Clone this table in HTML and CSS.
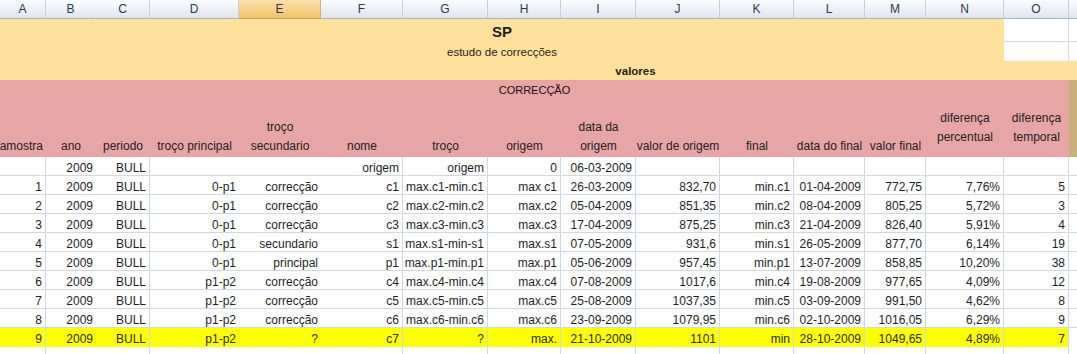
FILE: index.html
```html
<!DOCTYPE html>
<html lang="pt">
<head>
<meta charset="utf-8">
<title>SP - estudo de correcções</title>
<link rel="stylesheet" href="styles.css">
</head>
<body>
<div class="sheet">
  <div class="r heads">
    <div class="ch">A</div><div class="ch nob">B</div><div class="ch">C</div><div class="ch">D</div>
    <div class="ch sel">E</div><div class="ch">F</div><div class="ch">G</div><div class="ch">H</div>
    <div class="ch">I</div><div class="ch">J</div><div class="ch">K</div><div class="ch">L</div>
    <div class="ch">M</div><div class="ch">N</div><div class="ch">O</div><div class="ch last"></div>
  </div>

  <div class="title sp">SP</div>
  <div class="blank bb br"></div>
  <div class="blank bb"></div>

  <div class="title sub">estudo de correcções</div>
  <div class="blank br"></div>
  <div class="blank"></div>

  <div class="band lead"></div>
  <div class="band val">valores</div>
  <div class="band tail"></div>

  <div class="corr">CORRECÇÃO</div>
  <div class="tan"></div>

  <div class="lbl lbl-a"><span>amostra</span></div>
  <div class="lbl"><span>ano</span></div>
  <div class="lbl"><span>periodo</span></div>
  <div class="lbl"><span>troço principal</span></div>
  <div class="lbl"><span>troço</span><span>secundario</span></div>
  <div class="lbl"><span>nome</span></div>
  <div class="lbl"><span>troço</span></div>
  <div class="lbl"><span>origem</span></div>
  <div class="lbl"><span>data da</span><span>origem</span></div>
  <div class="lbl"><span>valor de origem</span></div>
  <div class="lbl"><span>final</span></div>
  <div class="lbl"><span>data do final</span></div>
  <div class="lbl"><span>valor final</span></div>
  <div class="lbl mid"><span>diferença</span><span>percentual</span></div>
  <div class="lbl mid"><span>diferença</span><span>temporal</span></div>

  <div class="r"><div></div><div>2009</div><div>BULL</div><div></div><div></div><div>origem</div><div>origem</div><div>0</div><div>06-03-2009</div><div></div><div></div><div></div><div></div><div></div><div></div><div></div></div>
  <div class="r"><div>1</div><div>2009</div><div>BULL</div><div>0-p1</div><div>correcção</div><div>c1</div><div>max.c1-min.c1</div><div>max c1</div><div>26-03-2009</div><div>832,70</div><div>min.c1</div><div>01-04-2009</div><div>772,75</div><div>7,76%</div><div>5</div><div></div></div>
  <div class="r"><div>2</div><div>2009</div><div>BULL</div><div>0-p1</div><div>correcção</div><div>c2</div><div>max.c2-min.c2</div><div>max.c2</div><div>05-04-2009</div><div>851,35</div><div>min.c2</div><div>08-04-2009</div><div>805,25</div><div>5,72%</div><div>3</div><div></div></div>
  <div class="r"><div>3</div><div>2009</div><div>BULL</div><div>0-p1</div><div>correcção</div><div>c3</div><div>max.c3-min.c3</div><div>max.c3</div><div>17-04-2009</div><div>875,25</div><div>min.c3</div><div>21-04-2009</div><div>826,40</div><div>5,91%</div><div>4</div><div></div></div>
  <div class="r"><div>4</div><div>2009</div><div>BULL</div><div>0-p1</div><div>secundario</div><div>s1</div><div>max.s1-min-s1</div><div>max.s1</div><div>07-05-2009</div><div>931,6</div><div>min.s1</div><div>26-05-2009</div><div>877,70</div><div>6,14%</div><div>19</div><div></div></div>
  <div class="r"><div>5</div><div>2009</div><div>BULL</div><div>0-p1</div><div>principal</div><div>p1</div><div>max.p1-min.p1</div><div>max.p1</div><div>05-06-2009</div><div>957,45</div><div>min.p1</div><div>13-07-2009</div><div>858,85</div><div>10,20%</div><div>38</div><div></div></div>
  <div class="r"><div>6</div><div>2009</div><div>BULL</div><div>p1-p2</div><div>correcção</div><div>c4</div><div>max.c4-min.c4</div><div>max.c4</div><div>07-08-2009</div><div>1017,6</div><div>min.c4</div><div>19-08-2009</div><div>977,65</div><div>4,09%</div><div>12</div><div></div></div>
  <div class="r"><div>7</div><div>2009</div><div>BULL</div><div>p1-p2</div><div>correcção</div><div>c5</div><div>max.c5-min.c5</div><div>max.c5</div><div>25-08-2009</div><div>1037,35</div><div>min.c5</div><div>03-09-2009</div><div>991,50</div><div>4,62%</div><div>8</div><div></div></div>
  <div class="r"><div>8</div><div>2009</div><div>BULL</div><div>p1-p2</div><div>correcção</div><div>c6</div><div>max.c6-min.c6</div><div>max.c6</div><div>23-09-2009</div><div>1079,95</div><div>min.c6</div><div>02-10-2009</div><div>1016,05</div><div>6,29%</div><div>9</div><div></div></div>
  <div class="r hl"><div>9</div><div>2009</div><div>BULL</div><div>p1-p2</div><div>?</div><div>c7</div><div>?</div><div>max.</div><div>21-10-2009</div><div>1101</div><div>min</div><div>28-10-2009</div><div>1049,65</div><div>4,89%</div><div>7</div><div></div></div>
  <div class="r"><div></div><div></div><div></div><div></div><div></div><div></div><div></div><div></div><div></div><div></div><div></div><div></div><div></div><div></div><div></div><div></div></div>
</div>
</body>
</html>
```

FILE: styles.css
```css
html, body {
  margin: 0;
  padding: 0;
  background: #ffffff;
}

body {
  font-family: "Liberation Sans", Arial, sans-serif;
  font-size: 12px;
  color: #1e1e1e;
}

.sheet {
  display: grid;
  grid-template-columns: 46px 50px 54px 89px 82px 82px 85px 73px 75px 84px 74px 71px 61px 78px 65px 8px;
  grid-template-rows: 19px 23px 19px 19px 19px 58px repeat(10, 19px) 19px;
  width: 1077px;
  height: 354px;
  overflow: hidden;
}

.sheet div {
  box-sizing: border-box;
  min-width: 0;
}

.r {
  display: contents;
}

/* column letters */
.ch {
  display: flex;
  align-items: center;
  justify-content: center;
  font-size: 12px;
  color: #2a3a52;
  background: linear-gradient(#fbfcfe, #dfe5ee);
  border-right: 1px solid #c4d0de;
  border-bottom: 1px solid #9eb6ce;
}

.ch.nob {
  border-right-color: transparent;
}

.ch.sel {
  background: linear-gradient(#fae1ab, #f2c46c);
  border-bottom-color: #c9a25a;
  border-right-color: #d9b36a;
}

.ch.last {
  border-right: none;
}

/* title band */
.title {
  grid-column: span 14;
  background: #ffe19b;
  text-align: center;
  white-space: nowrap;
}

.sp {
  font-weight: bold;
  font-size: 15px;
  line-height: 23px;
  padding-top: 1px;
}

.sub {
  font-size: 11.5px;
  line-height: 19px;
  padding-top: 1px;
}

.blank {
  background: #ffffff;
}

.bb {
  border-bottom: 1px solid #d0d7e5;
}

.br {
  border-right: 1px solid #d0d7e5;
}

.band {
  background: #ffe19b;
  line-height: 19px;
  padding-top: 1px;
}

.band.lead {
  grid-column: span 8;
}

.band.val {
  grid-column: span 2;
  font-weight: bold;
  font-size: 11.5px;
  text-align: center;
  padding-right: 10px;
}

.band.tail {
  grid-column: span 6;
}

/* pink header */
.corr {
  grid-column: span 15;
  background: #e8a5a6;
  text-align: center;
  font-size: 11px;
  line-height: 19px;
  padding-top: 1px;
  color: #1c0e0e;
}

.tan {
  grid-row: span 2;
  background: #c8b07c;
}

.lbl {
  background: #e8a5a6;
  display: flex;
  flex-direction: column;
  justify-content: flex-end;
  align-items: center;
  line-height: 19px;
  padding-bottom: 1px;
  white-space: nowrap;
  color: #222222;
}

.lbl.mid {
  justify-content: center;
  padding-bottom: 0;
}

.lbl.lbl-a {
  align-items: flex-end;
  padding-right: 3px;
}

/* data cells */
.r:not(.heads) > div {
  border-bottom: 1px solid #d0d7e5;
  text-align: right;
  padding: 4px 3px 0 0;
  line-height: 14px;
  white-space: nowrap;
  overflow: hidden;
}

.r:not(.heads) > div:nth-child(1),
.r:not(.heads) > div:nth-child(3),
.r:not(.heads) > div:nth-child(n+6):nth-child(-n+15) {
  border-right: 1px solid #d0d7e5;
}

.r.hl > div {
  background: #ffff00;
  border-color: transparent;
  color: #2a2a10;
}

.r.hl > div:nth-child(16) {
  background: #ffffff;
}
```
